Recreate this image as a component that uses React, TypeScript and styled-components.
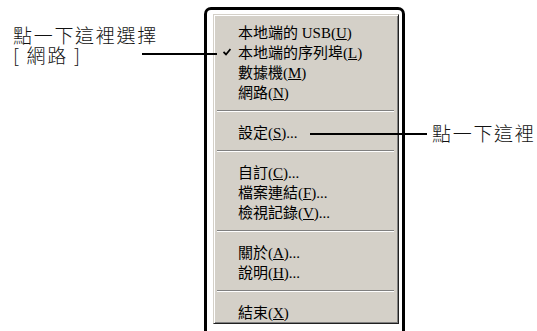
import styled, { createGlobalStyle } from 'styled-components';

const GlobalStyle = createGlobalStyle`
  html, body {
    margin: 0;
    padding: 0;
    background: #ffffff;
  }
`;

const Stage = styled.div`
  position: relative;
  width: 537px;
  height: 331px;
  overflow: hidden;
  display: grid;
  grid-template-columns: 204px 201px 1fr;
  background: #ffffff;
`;

const Note = styled.div<{ $top: number; $left: number }>`
  padding-top: ${p => p.$top}px;
  padding-left: ${p => p.$left}px;
  font-family: "Noto Sans CJK TC", "Noto Sans", sans-serif;
  font-weight: 300;
  font-size: 19px;
  line-height: 20px;
  letter-spacing: 1.7px;
  color: #111;
  white-space: nowrap;
`;

const Frame = styled.div`
  margin-top: 7px;
  height: 340px;
  box-sizing: border-box;
  border: 3px solid #000;
  border-bottom: none;
  border-radius: 7px 7px 0 0;
  padding: 4px 3px 0 6px;
`;

const Menu = styled.div`
  height: 310px;
  box-sizing: border-box;
  background: #d4d0c8;
  border: 1px solid;
  border-color: #d4d0c8 #202020 #202020 #d4d0c8;
  box-shadow: inset 1px 1px #ffffff, inset -1px -1px #808080;
  padding: 6px 2px 0 1px;
  display: flex;
  flex-direction: column;
`;

const Item = styled.div`
  height: 20px;
  display: grid;
  grid-template-columns: 23px 1fr;
  align-items: center;
  font-family: "Liberation Serif", "Noto Sans CJK TC", serif;
  font-size: 15px;
  color: #000;
  white-space: nowrap;
`;

const CheckCell = styled.span`
  display: flex;
  justify-content: center;
  align-items: center;
`;

const Key = styled.span`
  text-decoration: underline;
  text-underline-offset: 1px;
`;

const Separator = styled.div`
  height: 20px;
  display: flex;
  align-items: center;
  padding: 0 2px 0 2px;

  &::before {
    content: '';
    flex: 1;
    height: 1px;
    background: #808080;
    border-bottom: 1px solid #ffffff;
  }
`;

const Line = styled.div<{ $x: number; $y: number; $w: number }>`
  position: absolute;
  left: ${p => p.$x}px;
  top: ${p => p.$y}px;
  width: ${p => p.$w}px;
  height: 2px;
  background: #000;
`;

type Entry = { label: string; key?: string; dots?: boolean; checked?: boolean } | 'sep';

const entries: Entry[] = [
  { label: '本地端的 USB', key: 'U' },
  { label: '本地端的序列埠', key: 'L', checked: true },
  { label: '數據機', key: 'M' },
  { label: '網路', key: 'N' },
  'sep',
  { label: '設定', key: 'S', dots: true },
  'sep',
  { label: '自訂', key: 'C', dots: true },
  { label: '檔案連結', key: 'F', dots: true },
  { label: '檢視記錄', key: 'V', dots: true },
  'sep',
  { label: '關於', key: 'A', dots: true },
  { label: '說明', key: 'H', dots: true },
  'sep',
  { label: '結束', key: 'X' },
];

const Check = () => (
  <svg width="8" height="8" viewBox="0 0 8 8">
    <path d="M0.5 4 L3 6.5 L7.5 1" fill="none" stroke="#000" strokeWidth="1.8" />
  </svg>
);

export default function App() {
  return (
    <>
      <GlobalStyle />
      <Stage>
        <Note $top={25} $left={13}>
          點一下這裡選擇
          <br />[ 網路 ]
        </Note>
        <Frame>
          <Menu>
            {entries.map((e, i) =>
              e === 'sep' ? (
                <Separator key={i} />
              ) : (
                <Item key={i}>
                  <CheckCell>{e.checked && <Check />}</CheckCell>
                  <span>
                    {e.label}(<Key>{e.key}</Key>){e.dots && '...'}
                  </span>
                </Item>
              )
            )}
          </Menu>
        </Frame>
        <Note $top={123} $left={27}>點一下這裡</Note>
        <Line $x={142} $y={53} $w={75} />
        <Line $x={310} $y={133} $w={117} />
      </Stage>
    </>
  );
}
